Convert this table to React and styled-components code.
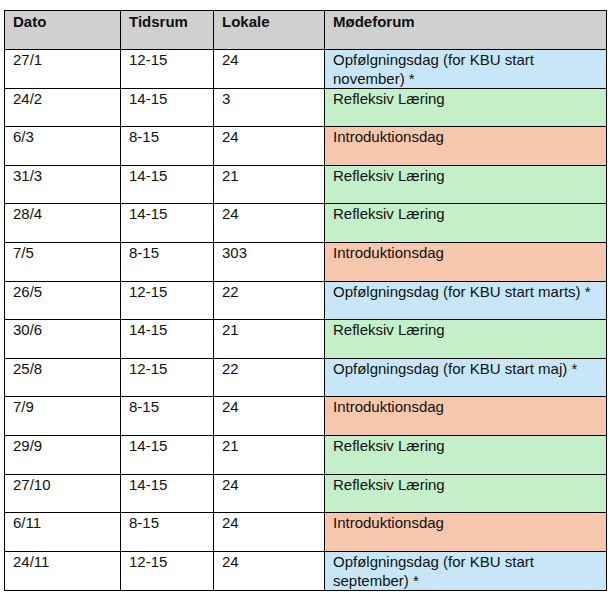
import React from "react";
import styled, { createGlobalStyle } from "styled-components";

const Global = createGlobalStyle`
  html, body { margin: 0; padding: 0; background: #ffffff; }
  body { font-family: "Liberation Sans", Arial, sans-serif; color: #111; }
`;

const Page = styled.div`
  padding: 10px 0 0 4px;
`;

const Table = styled.table`
  border-collapse: collapse;
  table-layout: fixed;
  width: 602px;
  font-size: 15px;
  line-height: 19px;
`;

const Col = styled.col`
  width: ${(p) => p.$w}px;
`;

const HeadCell = styled.th`
  background: #d0d0d0;
  border: 1.5px solid #000;
  text-align: left;
  vertical-align: top;
  font-weight: bold;
  padding: 1px 8px 0 8px;
  height: 38.6px;
  box-sizing: border-box;
`;

const Cell = styled.td`
  border: 1.5px solid #000;
  text-align: left;
  vertical-align: top;
  padding: 0 8px 0 8px;
  height: 38.6px;
  box-sizing: border-box;
  background: ${(p) => p.$bg || "#ffffff"};
`;

const colors = {
  opf: "#c7e7f8",
  ref: "#c3efc9",
  intro: "#f6c6ad",
};

const rows = [
  ["27/1", "12-15", "24", "Opfølgningsdag (for KBU start november) *", "opf"],
  ["24/2", "14-15", "3", "Refleksiv Læring", "ref"],
  ["6/3", "8-15", "24", "Introduktionsdag", "intro"],
  ["31/3", "14-15", "21", "Refleksiv Læring", "ref"],
  ["28/4", "14-15", "24", "Refleksiv Læring", "ref"],
  ["7/5", "8-15", "303", "Introduktionsdag", "intro"],
  ["26/5", "12-15", "22", "Opfølgningsdag (for KBU start marts) *", "opf"],
  ["30/6", "14-15", "21", "Refleksiv Læring", "ref"],
  ["25/8", "12-15", "22", "Opfølgningsdag (for KBU start maj) *", "opf"],
  ["7/9", "8-15", "24", "Introduktionsdag", "intro"],
  ["29/9", "14-15", "21", "Refleksiv Læring", "ref"],
  ["27/10", "14-15", "24", "Refleksiv Læring", "ref"],
  ["6/11", "8-15", "24", "Introduktionsdag", "intro"],
  ["24/11", "12-15", "24", "Opfølgningsdag (for KBU start september) *", "opf"],
];

export default function App() {
  return (
    <Page>
      <Global />
      <Table>
        <colgroup>
          <Col $w={116} />
          <Col $w={93} />
          <Col $w={111} />
          <Col $w={282} />
        </colgroup>
        <thead>
          <tr>
            <HeadCell>Dato</HeadCell>
            <HeadCell>Tidsrum</HeadCell>
            <HeadCell>Lokale</HeadCell>
            <HeadCell>Mødeforum</HeadCell>
          </tr>
        </thead>
        <tbody>
          {rows.map(([d, t, l, m, k]) => (
            <tr key={d}>
              <Cell>{d}</Cell>
              <Cell>{t}</Cell>
              <Cell>{l}</Cell>
              <Cell $bg={colors[k]}>{m}</Cell>
            </tr>
          ))}
        </tbody>
      </Table>
    </Page>
  );
}
